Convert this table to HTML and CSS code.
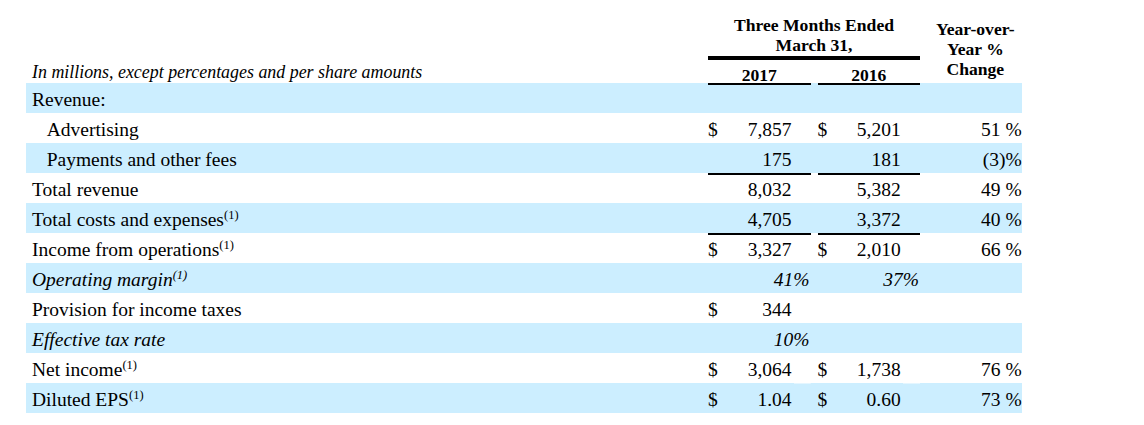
FILE: index.html
```html
<!DOCTYPE html>
<html lang="en">
<head>
<meta charset="utf-8">
<title>Financial highlights</title>
<link rel="stylesheet" href="styles.css">
</head>
<body>
<div class="report">
  <div class="grid head">
    <div class="unit">In millions, except percentages and per share amounts</div>
    <div class="period">Three Months Ended<br>March 31,</div>
    <div class="year y1">2017</div>
    <div class="year y2">2016</div>
    <div class="yoy">Year-over-<br>Year %<br>Change</div>
  </div>

  <div class="grid row shade">
    <div class="lbl">Revenue:</div>
    <div class="cell a ruled"></div><div class="gap"></div>
    <div class="cell b ruled"></div>
    <div class="chg"></div>
  </div>

  <div class="grid row">
    <div class="lbl sub">Advertising</div>
    <div class="cell a"><span>$</span><span class="v">7,857</span></div><div class="gap"></div>
    <div class="cell b"><span>$</span><span class="v">5,201</span></div>
    <div class="chg">51 %</div>
  </div>

  <div class="grid row shade">
    <div class="lbl sub">Payments and other fees</div>
    <div class="cell a"><span class="v">175</span></div><div class="gap"></div>
    <div class="cell b"><span class="v">181</span></div>
    <div class="chg">(3)%</div>
  </div>

  <div class="grid row">
    <div class="lbl">Total revenue</div>
    <div class="cell a ruled"><span class="v">8,032</span></div><div class="gap"></div>
    <div class="cell b ruled"><span class="v">5,382</span></div>
    <div class="chg">49 %</div>
  </div>

  <div class="grid row shade">
    <div class="lbl">Total costs and expenses<sup>(1)</sup></div>
    <div class="cell a"><span class="v">4,705</span></div><div class="gap"></div>
    <div class="cell b"><span class="v">3,372</span></div>
    <div class="chg">40 %</div>
  </div>

  <div class="grid row">
    <div class="lbl">Income from operations<sup>(1)</sup></div>
    <div class="cell a ruled"><span>$</span><span class="v">3,327</span></div><div class="gap"></div>
    <div class="cell b ruled"><span>$</span><span class="v">2,010</span></div>
    <div class="chg">66 %</div>
  </div>

  <div class="grid row shade">
    <div class="lbl it">Operating margin<sup>(1)</sup></div>
    <div class="cell a pct"><span class="v">41%</span></div><div class="gap"></div>
    <div class="cell b pct"><span class="v">37%</span></div>
    <div class="chg"></div>
  </div>

  <div class="grid row">
    <div class="lbl">Provision for income taxes</div>
    <div class="cell a"><span>$</span><span class="v">344</span></div><div class="gap"></div>
    <div class="cell b"></div>
    <div class="chg"></div>
  </div>

  <div class="grid row shade">
    <div class="lbl it">Effective tax rate</div>
    <div class="cell a pct"><span class="v">10%</span></div><div class="gap"></div>
    <div class="cell b"></div>
    <div class="chg"></div>
  </div>

  <div class="grid row">
    <div class="lbl">Net income<sup>(1)</sup></div>
    <div class="cell a"><span>$</span><span class="v">3,064</span></div><div class="gap"></div>
    <div class="cell b"><span>$</span><span class="v">1,738</span></div>
    <div class="chg">76 %</div>
  </div>

  <div class="grid row shade">
    <div class="lbl">Diluted EPS<sup>(1)</sup></div>
    <div class="cell a nick"><span>$</span><span class="v">1.04</span></div><div class="gap"></div>
    <div class="cell b nick"><span>$</span><span class="v">0.60</span></div>
    <div class="chg">73 %</div>
  </div>
</div>
</body>
</html>
```
FILE: styles.css
```css
html, body {
  margin: 0;
  padding: 0;
  background: #ffffff;
}

body {
  font-family: "Liberation Serif", "Times New Roman", serif;
  color: #000000;
}

.report {
  margin-left: 26px;
  width: 995.7px;
}

.grid {
  display: grid;
  grid-template-columns: 682px 102.5px 7px 102.5px 101.7px;
}

/* ---------- header ---------- */
.head {
  grid-template-rows: 60px 23px;
  height: 83px;
}

.unit {
  grid-column: 1;
  grid-row: 1 / 3;
  align-self: end;
  padding-left: 6px;
  padding-bottom: 1px;
  font-style: italic;
  font-size: 17.9px;
  line-height: 20px;
  white-space: nowrap;
}

.period {
  grid-column: 2 / 5;
  grid-row: 1;
  box-sizing: border-box;
  padding-top: 15px;
  padding-bottom: 1px;
  border-bottom: 4px solid #000;
  text-align: center;
  font-weight: bold;
  font-size: 17.6px;
  line-height: 20px;
}

.year {
  grid-row: 2;
  padding-top: 6px;
  text-align: center;
  font-weight: bold;
  font-size: 17.6px;
  line-height: 18px;
}

.y1 { grid-column: 2; }
.y2 { grid-column: 4; }

.yoy {
  grid-column: 5;
  grid-row: 1 / 3;
  padding-top: 19px;
  padding-left: 9px;
  text-align: center;
  font-weight: bold;
  font-size: 17.6px;
  line-height: 20px;
  white-space: nowrap;
}

/* ---------- body rows ---------- */
.row {
  height: 30px;
  font-size: 19.5px;
  line-height: 26px;
}

.row > div {
  box-sizing: border-box;
  padding-top: 4px;
  white-space: nowrap;
}

.shade {
  background: #cceeff;
}

.lbl {
  padding-left: 6px;
}

.lbl.sub {
  padding-left: 20.7px;
}

.it {
  font-style: italic;
}

sup {
  font-size: 12.5px;
  line-height: 0;
  vertical-align: 7px;
}

.cell {
  display: flex;
  justify-content: space-between;
}

.cell .v {
  margin-left: auto;
}

.cell.a { padding-right: 19px; }
.cell.b { padding-right: 19.3px; }

.cell.pct {
  padding-right: 1px;
  font-style: italic;
}

.ruled {
  box-shadow: inset 0 2px 0 #000;
}

.cell.nick {
  background: linear-gradient(to left, #e4f6ff 17px, transparent 17px) no-repeat top / 100% 1px;
}

.chg {
  text-align: right;
}
```
